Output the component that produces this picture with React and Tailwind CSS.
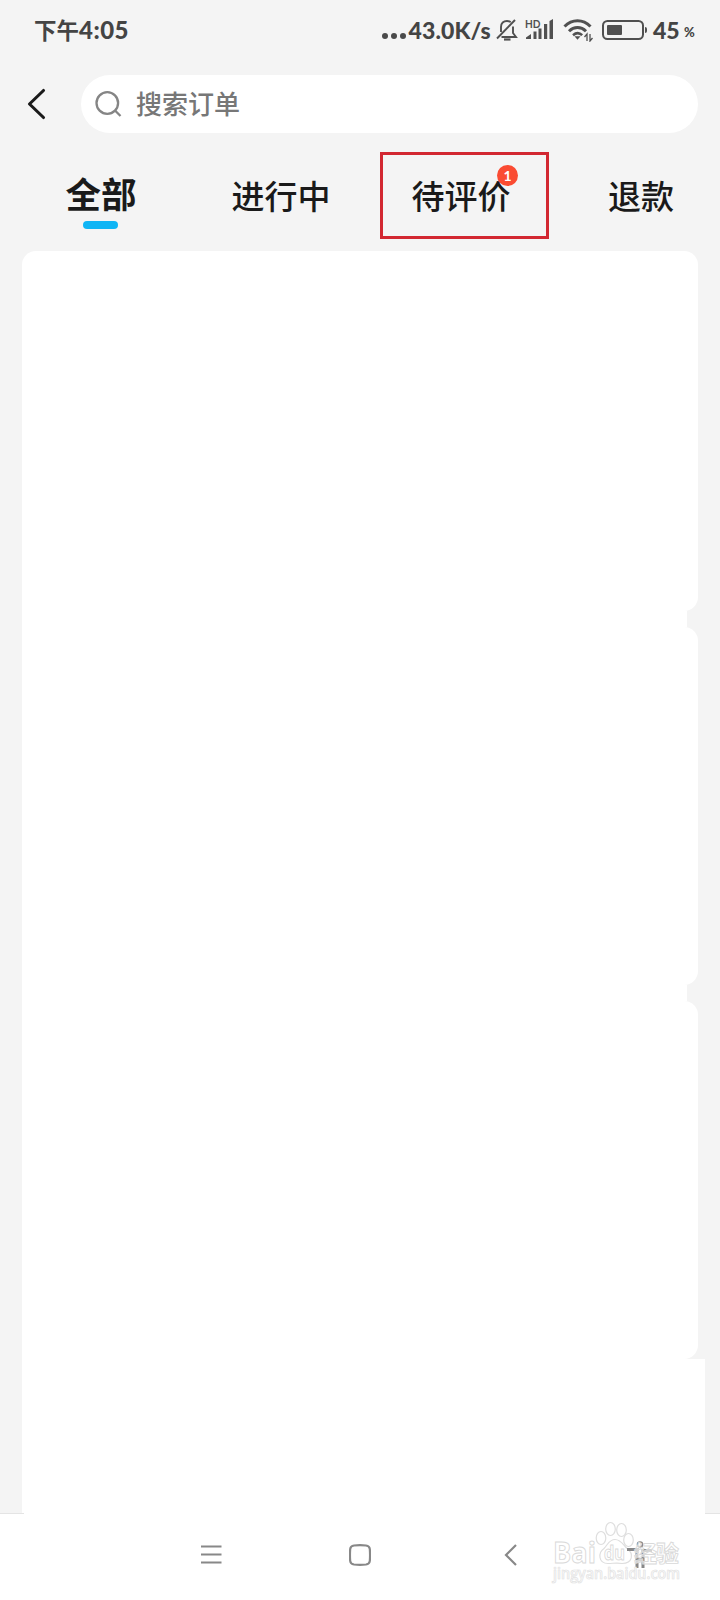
import React from "react";

const latin = "font-['Lato','Noto_Sans_CJK_SC',sans-serif]";

function StatusBar() {
  return (
    <div className="flex h-[60px] shrink-0 items-center justify-between pl-[34px] pr-[25px] text-[#444]">
      <div className="flex items-center font-bold leading-none">
        <span className="mb-[2px] font-['Noto_Sans_CJK_SC',sans-serif] text-[22.500px] font-bold">下午</span>
        <span className="font-['Lato',sans-serif] text-[24px] font-black tracking-[0.5px]">4:05</span>
      </div>
      <div className={`flex items-center font-black leading-none ${latin}`}>
        <span className="mr-[3px] mt-[12px] flex gap-[3px]">
          <i className="size-[6px] rounded-full bg-[#4a4a4a]" />
          <i className="size-[6px] rounded-full bg-[#4a4a4a]" />
          <i className="size-[6px] rounded-full bg-[#4a4a4a]" />
        </span>
        <span className="w-[87px] whitespace-nowrap text-[23px] tracking-[0.1px]">43.0K/s</span>
        <svg className="h-[24px] w-[22px]" viewBox="0 0 22 24" fill="none" stroke="#505050" strokeWidth="1.9">
          <path d="M1 20.500L19 2" />
          <path d="M5 14V9C5 5 7.500 3 11 3c1.400 0 2.700.4 3.700 1.100M17 8.500V15l3 4H5.500" />
          <path d="M8 21.500h6.500" strokeWidth="2.200" />
        </svg>
        <svg className="ml-[7px] h-[24px] w-[29px]" viewBox="0 0 29 24">
          <text x="0" y="9.500" fontSize="11" fontFamily="Lato" fontWeight="700" fill="#505050" textLength="15.500" lengthAdjust="spacingAndGlyphs">HD</text>
          <g fill="#505050">
            <path d="M1 21v-1.500l5-3.500v5z" />
            <rect x="8.500" y="13.500" width="3" height="7.500" />
            <rect x="13.500" y="10.500" width="3" height="10.500" />
            <rect x="19" y="6" width="3.200" height="15" />
            <path d="M24.500 3l3.500-2v20h-3.500z" />
          </g>
        </svg>
        <svg className="ml-[9px] h-[24px] w-[30px]" viewBox="0 0 30 24" fill="none" stroke="#505050" strokeWidth="3">
          <path d="M1.500 8.500C9 .8 20 .8 27.500 8.500" />
          <path d="M6 13.300C11 8.300 18 8.300 23 13.300" />
          <path d="M10 17.200C13 14.600 16.500 14.600 19.200 17.200" strokeWidth="2.500" />
          <path d="M11.500 18.200h6l-3 3.600z" fill="#505050" stroke="none" />
          <path d="M24 23v-7l-2.500 3M27 16v7l2.500-3" strokeWidth="1.300" />
        </svg>
        <div className="ml-[9px] flex h-[20px] w-[42px] items-center rounded-[5.500px] border-[2.500px] border-[#505050] p-[3px]">
          <i className="h-[10px] w-[15px] rounded-[1px] bg-[#505050]" />
        </div>
        <i className="ml-[1px] h-[6px] w-[2.500px] rounded-r bg-[#505050]" />
        <span className="ml-[6px] w-[31px] text-[23px]">45</span>
        <span className="mt-[5px] w-[11px] text-[13px] font-black">%</span>
      </div>
    </div>
  );
}

function SearchRow() {
  return (
    <div className="mt-[15px] flex h-[58px] shrink-0 items-center pl-[27px] pr-[22px]">
      <svg className="h-[32px] w-[20px]" viewBox="0 0 20 32" fill="none" stroke="#1a1a1a" strokeWidth="3.100" strokeLinecap="round" strokeLinejoin="round">
        <path d="M16.500 2.500L2.500 16l14 13.500" />
      </svg>
      <div className="ml-[34px] flex h-full grow items-center rounded-full bg-white pl-[14px]">
        <svg className="h-[28px] w-[28px]" viewBox="0 0 28 28" fill="none" stroke="#858585" strokeWidth="2.300">
          <circle cx="12.300" cy="13" r="10.800" />
          <path d="M20 20.500l5.500 5.500" />
        </svg>
        <span className="mb-[2px] ml-[13px] font-['Noto_Sans_CJK_SC',sans-serif] text-[26px] font-medium leading-none text-[#777]">搜索订单</span>
      </div>
    </div>
  );
}

function Tabs() {
  const tab = "flex w-[180px] shrink-0 justify-center pt-[45px] text-[33px] font-medium leading-[34px]";
  return (
    <div className="flex h-[118px] shrink-0 overflow-hidden pl-[11px] font-['Noto_Sans_CJK_SC',sans-serif] text-[#1a1a1a]">
      <div className="flex w-[180px] shrink-0 flex-col items-center pt-[42px]">
        <span className="text-[35.500px] font-bold leading-[36px]">全部</span>
        <i className="mt-[10px] mr-[2px] h-[8px] w-[35px] rounded-full bg-[#0fb5f5]" />
      </div>
      <div className={tab}>进行中</div>
      <div className="relative flex w-[180px] shrink-0 justify-center pt-[45px] text-[33px] font-medium leading-[34px]">
        待评价
        <div className="absolute left-[126px] top-[32px] flex size-[21px] items-center justify-center rounded-full bg-[#fa4b32] font-['Lato',sans-serif] text-[14px] font-bold leading-none text-white">1</div>
        <div className="absolute left-[9px] top-[19px] h-[87px] w-[169px] border-[3px] border-[#d22731]" />
      </div>
      <div className={tab}>退款</div>
    </div>
  );
}

function Orders() {
  return (
    <div className="flex h-[1262px] shrink-0 flex-col pl-[22px]">
      <div className="h-[360px] w-[676px] rounded-t-[14px] rounded-br-[14px] bg-white" />
      <div className="h-[16px] w-[665px] bg-white" />
      <div className="h-[358px] w-[676px] rounded-r-[14px] bg-white" />
      <div className="h-[16px] w-[665px] bg-white" />
      <div className="h-[358px] w-[676px] rounded-r-[14px] bg-white" />
      <div className="w-[683px] grow bg-white" />
    </div>
  );
}

function Watermark() {
  return (
    <svg className="absolute left-[546px] top-[6px] h-[68px] w-[144px]" viewBox="0 0 144 68">
      <g fill="#fff" stroke="#dedede" strokeWidth="1.200">
        <ellipse cx="55" cy="19" rx="4.800" ry="6.500" />
        <ellipse cx="64.500" cy="10" rx="4.800" ry="6.500" />
        <ellipse cx="75.500" cy="11" rx="4.800" ry="6.500" />
        <ellipse cx="82.500" cy="21" rx="4.800" ry="6.500" />
        <path d="M69 20.500c-6 0-7 5-11 9-6 4-6 15 4 15 5 0 9-1 14 0 11 0 12-10 5-15-4-4-6-9-12-9z" />
      </g>
      <g fill="none" stroke="#888" strokeWidth="3">
        <path d="M81 30.500h12M95 31.500h11" />
        <path d="M91 49V32M97 49V33M91 41h6" />
        <circle cx="94" cy="25.500" r="2.500" strokeWidth="1.600" />
      </g>
      <g fill="#fff" fillOpacity=".65" stroke="#d9d9d9" strokeWidth=".9" fontWeight="700">
        <text x="7" y="43.500" fontSize="28" fontFamily="Open Sans" textLength="43" lengthAdjust="spacingAndGlyphs">Bai</text>
        <text x="58" y="40.500" fontSize="19" fontFamily="Open Sans" textLength="21" lengthAdjust="spacingAndGlyphs">du</text>
        <text x="88" y="42.500" fontSize="23" fontFamily="Noto Sans CJK SC" textLength="45">经验</text>
      </g>
      <text x="7" y="60" fontSize="15.500" fontFamily="Open Sans" fontWeight="600" fill="#fafafa" stroke="#e2e2e2" strokeWidth=".7" textLength="127" lengthAdjust="spacingAndGlyphs">jingyan.baidu.com</text>
    </svg>
  );
}

function NavBar() {
  return (
    <div className="relative flex h-[87px] shrink-0 bg-white">
      <div className="absolute left-0 top-0 h-px w-[24px] bg-[#e4e4e4]" />
      <div className="absolute right-0 top-0 h-px w-[15px] bg-[#e4e4e4]" />
      <div className="flex w-full items-start pl-[201px] pt-[31px]">
        <svg className="h-[21px] w-[21px]" viewBox="0 0 21 21" stroke="#888" strokeWidth="2">
          <path d="M0 2.500h20.500M0 10.500h20.500M0 18.500h20.500" />
        </svg>
        <svg className="ml-[127px] h-[22px] w-[22px]" viewBox="0 0 22 22" fill="none" stroke="#888" strokeWidth="2.200">
          <path d="M5 1.500Q11 .9 17 1.500Q20.500 2 20.800 5Q21.300 11 20.800 17Q20.500 20 17 20.500Q11 21.100 5 20.500Q1.500 20 1.200 17Q.7 11 1.200 5Q1.500 2 5 1.500Z" />
        </svg>
        <svg className="ml-[133px] h-[22px] w-[14px]" viewBox="0 0 14 22" fill="none" stroke="#888" strokeWidth="2.200">
          <path d="M12 1L2 11l10 10" />
        </svg>
      </div>
      <Watermark />
    </div>
  );
}

export default function App() {
  return (
    <div className="flex h-[1600px] w-[720px] flex-col overflow-hidden bg-[#f4f4f4]">
      <StatusBar />
      <SearchRow />
      <Tabs />
      <Orders />
      <NavBar />
    </div>
  );
}
